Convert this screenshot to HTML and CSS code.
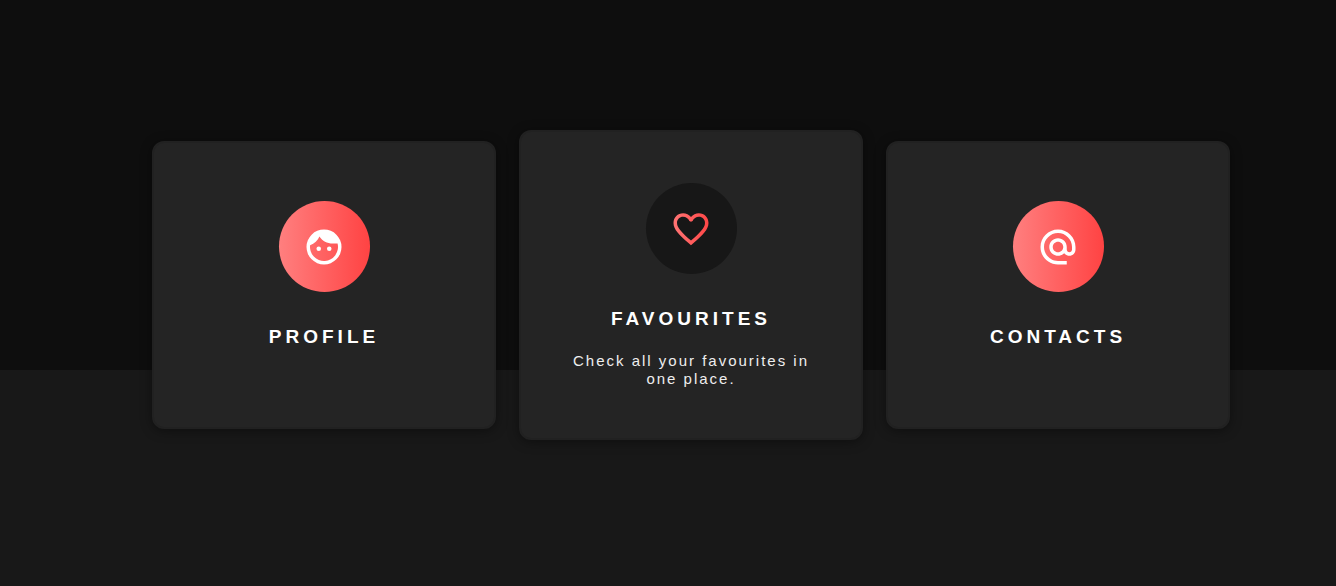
FILE: index.html
```html
<!DOCTYPE html>
<html lang="en">
<head>
<meta charset="utf-8">
<meta name="viewport" content="width=device-width, initial-scale=1">
<title>Cards</title>
<link rel="stylesheet" href="styles.css">
</head>
<body>
<main class="cards">
  <article class="card">
    <div class="card-icon">
      <svg viewBox="0 0 24 24" aria-hidden="true"><path fill-rule="evenodd" d="M12 2a10 10 0 1 0 0 20 10 10 0 0 0 0-20zM9.400 6C8.500 8.300 6.500 10.200 4.060 11A8 8 0 1 0 19.750 10H17C13.800 10 11 8.500 9.400 6z"/><circle cx="9" cy="13" r="1.300"/><circle cx="15" cy="13" r="1.300"/></svg>
    </div>
    <h2 class="card-title">PROFILE</h2>
  </article>
  <article class="card card-active">
    <div class="card-icon">
      <svg viewBox="0 0 24 24" aria-hidden="true">
        <defs><linearGradient id="heart-fill" x1="0" x2="1" y1="0" y2="0"><stop offset="0" stop-color="#ff7474"/><stop offset="1" stop-color="#ff4747"/></linearGradient></defs>
        <path fill="url(#heart-fill)" d="M16.500 3c-1.740 0-3.410.810-4.500 2.090C10.910 3.810 9.240 3 7.500 3 4.420 3 2 5.420 2 8.500c0 3.780 3.400 6.860 8.550 11.540L12 21.350l1.450-1.320C18.600 15.360 22 12.280 22 8.500 22 5.420 19.580 3 16.500 3zM12 18.600C7.140 14.240 4 11.390 4 8.500 4 6.500 5.500 5 7.500 5c1.540 0 3.040.990 3.570 2.360L12 7.900l.930-.540C13.460 5.990 14.960 5 16.500 5c2 0 3.500 1.500 3.500 3.500 0 2.890-3.140 5.740-8 10.100z"/>
      </svg>
    </div>
    <h2 class="card-title">FAVOURITES</h2>
    <p class="card-text">Check all your favourites in one place.</p>
  </article>
  <article class="card">
    <div class="card-icon">
      <svg viewBox="0 0 24 24" aria-hidden="true"><path d="M12 2C6.480 2 2 6.480 2 12s4.480 10 10 10h5v-2h-5c-4.340 0-8-3.660-8-8s3.660-8 8-8 8 3.660 8 8v1.430c0 .790-.710 1.570-1.500 1.570s-1.500-.780-1.500-1.570V12c0-2.760-2.240-5-5-5s-5 2.240-5 5 2.240 5 5 5c1.380 0 2.640-.560 3.540-1.470.650.890 1.770 1.470 2.960 1.470 1.970 0 3.500-1.600 3.500-3.570V12c0-5.520-4.480-10-10-10zm0 13c-1.660 0-3-1.340-3-3s1.340-3 3-3 3 1.340 3 3-1.340 3-3 3z"/></svg>
    </div>
    <h2 class="card-title">CONTACTS</h2>
  </article>
</main>
</body>
</html>
```
FILE: styles.css
```css
* {
  box-sizing: border-box;
}

body {
  margin: 0;
  min-height: 100vh;
  display: flex;
  font-family: "Liberation Sans", Arial, sans-serif;
  color: #fff;
  background: linear-gradient(#0e0e0e 370px, #181818 370px);
}

.cards {
  flex: 1;
  display: grid;
  grid-template-columns: repeat(3, minmax(0, 344px));
  justify-content: center;
  align-content: center;
  align-items: center;
  gap: 23px;
  padding: 0 0 16px 46px;
}

.card {
  display: flex;
  flex-direction: column;
  align-items: center;
  padding: 58px 48px 79px;
  text-align: center;
  background: #242424;
  border: 2px solid #212121;
  border-radius: 12px;
  box-shadow: 0 2px 12px rgba(0, 0, 0, 0.4);
}

.card-active {
  padding: 51px 48px 50px;
}

.card-icon {
  display: grid;
  place-items: center;
  width: 91px;
  height: 91px;
  margin-bottom: 34px;
  border-radius: 50%;
  background: linear-gradient(to right, #ff7f7f, #ff4343);
}

.card-icon svg {
  width: 42px;
  height: 42px;
  fill: #fff;
}

.card-active .card-icon {
  background: #171717;
}

.card-title {
  margin: 0;
  font-size: 19px;
  line-height: 22px;
  letter-spacing: 4px;
}

.card-text {
  margin: 22px 0 0;
  font-size: 15px;
  line-height: 18px;
  letter-spacing: 2px;
  color: #eee;
}
```
